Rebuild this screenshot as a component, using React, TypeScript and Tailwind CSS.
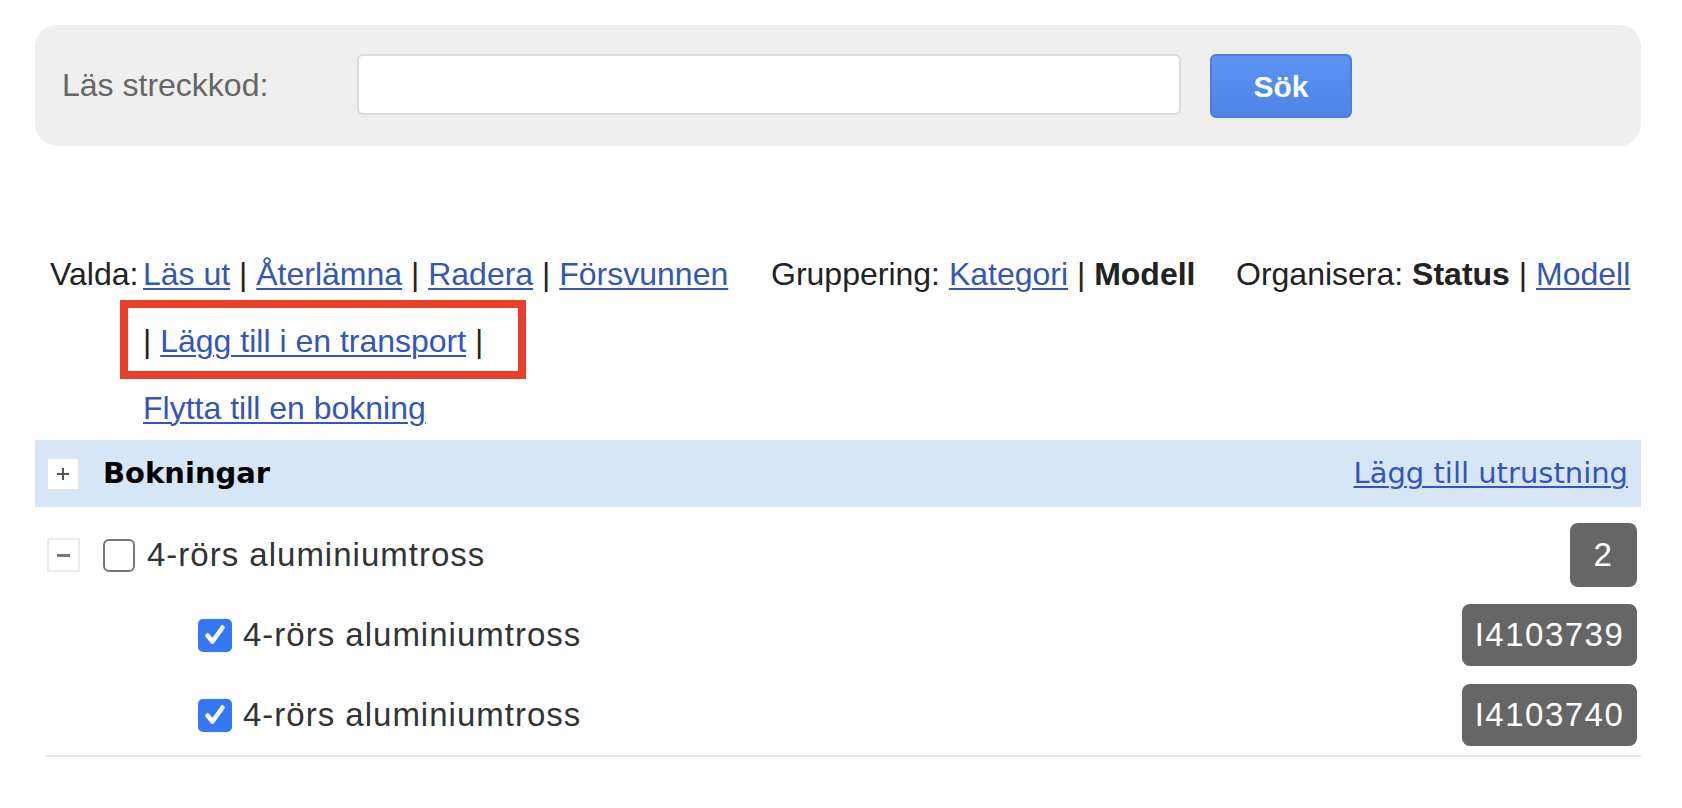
import React from 'react';

const link =
  'text-[#3456b5] underline decoration-[2px] underline-offset-[3px] cursor-pointer';

const Sep = () => <span className="text-[#222]"> | </span>;

const Badge = ({ label, wide }: { label: string; wide?: boolean }) => (
  <div
    className={`flex items-center justify-center rounded-[8px] bg-[#666666] text-white text-[33px] tracking-[1.5px] ${
      wide ? 'h-[62px] w-[175px]' : 'h-[64px] w-[67px]'
    }`}
  >
    {label}
  </div>
);

const CheckedBox = () => (
  <div className="flex h-[33px] w-[34px] items-center justify-center rounded-[5px] bg-[#3478f6]">
    <svg width="24" height="24" viewBox="0 0 24 24" fill="none">
      <path d="M4.5 12.5 L9.5 18.5 L19.5 4.5" stroke="white" strokeWidth="4.5" strokeLinecap="round" strokeLinejoin="round" />
    </svg>
  </div>
);

const ChildRow = ({ name, code }: { name: string; code: string }) => (
  <div className="flex h-[80px] items-center pr-[4px]">
    <div className="ml-[163px]">
      <CheckedBox />
    </div>
    <span className="ml-[11px] text-[33px] tracking-[1px] text-[#333]">{name}</span>
    <div className="ml-auto">
      <Badge label={code} wide />
    </div>
  </div>
);

export default function App() {
  return (
    <div className="h-[808px] w-[1682px] overflow-hidden bg-white pl-[35px] pt-[25px] font-['Liberation_Sans',Arial,sans-serif]">
      <div className="w-[1606px]">
        {/* barcode search */}
        <div className="flex h-[121px] items-start rounded-[22px] bg-[#efefef] pt-[29px]">
          <label className="flex h-[61px] w-[322px] items-center pl-[27px] text-[32px] text-[#666]">
            Läs streckkod:
          </label>
          <input
            type="text"
            className="h-[61px] w-[824px] rounded-[6px] border-2 border-[#dcdcdc] bg-white px-3 text-[28px] outline-none"
          />
          <button className="ml-[29px] h-[64px] w-[142px] rounded-[6px] border-2 border-[#4a7fdc] bg-gradient-to-b from-[#5d94f4] to-[#4e84e4] text-[30px] font-bold text-white">
            Sök
          </button>
        </div>

        {/* actions */}
        <div className="mt-[94px] flex text-[32px] text-[#222]">
          <div className="flex w-[736px] pl-[15px]">
            <span className="flex h-[67px] w-[93px] items-center">Valda:</span>
            <div className="flex flex-col">
              <div className="flex h-[67px] items-center whitespace-pre">
                <span className={link}>Läs ut</span>
                <Sep />
                <span className={link}>Återlämna</span>
                <Sep />
                <span className={link}>Radera</span>
                <Sep />
                <span className={link}>Försvunnen</span>
              </div>
              <div className="relative flex h-[67px] items-center whitespace-pre">
                <span>| </span>
                <span className={link}>Lägg till i en transport</span>
                <span> |</span>
                <div className="pointer-events-none absolute left-[-23px] top-[-7px] h-[79px] w-[406px] border-[8px] border-[#e8402a]" />
              </div>
              <div className="flex h-[67px] items-center">
                <span className={link}>Flytta till en bokning</span>
              </div>
            </div>
          </div>
          <div className="flex h-[67px] w-[465px] items-center whitespace-pre">
            <span>Gruppering: </span>
            <span className={link}>Kategori</span>
            <Sep />
            <span className="font-bold">Modell</span>
          </div>
          <div className="flex h-[67px] items-center whitespace-pre">
            <span>Organisera: </span>
            <span className="font-bold">Status</span>
            <Sep />
            <span className={link}>Modell</span>
          </div>
        </div>

        {/* bookings header */}
        <div className="-mt-[1px] flex h-[67px] items-center bg-[#d7e6f7] pr-[13px] font-['DejaVu_Sans',Verdana,sans-serif]">
          <div className="ml-[12px] flex h-[32px] w-[32px] items-center justify-center border border-[#e4e4e4] bg-white">
            <svg width="16" height="16" viewBox="0 0 16 16">
              <path d="M8 2 V14 M2 8 H14" stroke="#555" strokeWidth="2" />
            </svg>
          </div>
          <span className="ml-[24px] text-[29px] font-bold text-black">Bokningar</span>
          <span className={`ml-auto text-[29px] ${link}`}>Lägg till utrustning</span>
        </div>

        {/* items */}
        <div className="mt-[8px]">
          <div className="flex h-[80px] items-center pr-[4px]">
            <div className="ml-[12px] flex h-[34px] w-[33px] items-center justify-center border-2 border-[#ebebeb] bg-white">
              <div className="h-[3px] w-[13px] bg-[#777]" />
            </div>
            <div className="ml-[23px] h-[33px] w-[32px] rounded-[6px] border-2 border-[#777] bg-white" />
            <span className="ml-[12px] text-[33px] tracking-[1px] text-[#333]">4-rörs aluminiumtross</span>
            <div className="ml-auto">
              <Badge label="2" />
            </div>
          </div>
          <ChildRow name="4-rörs aluminiumtross" code="I4103739" />
          <ChildRow name="4-rörs aluminiumtross" code="I4103740" />
        </div>
        <div className="ml-[11px] h-[2px] bg-[#e6e6e6]" />
      </div>
    </div>
  );
}
